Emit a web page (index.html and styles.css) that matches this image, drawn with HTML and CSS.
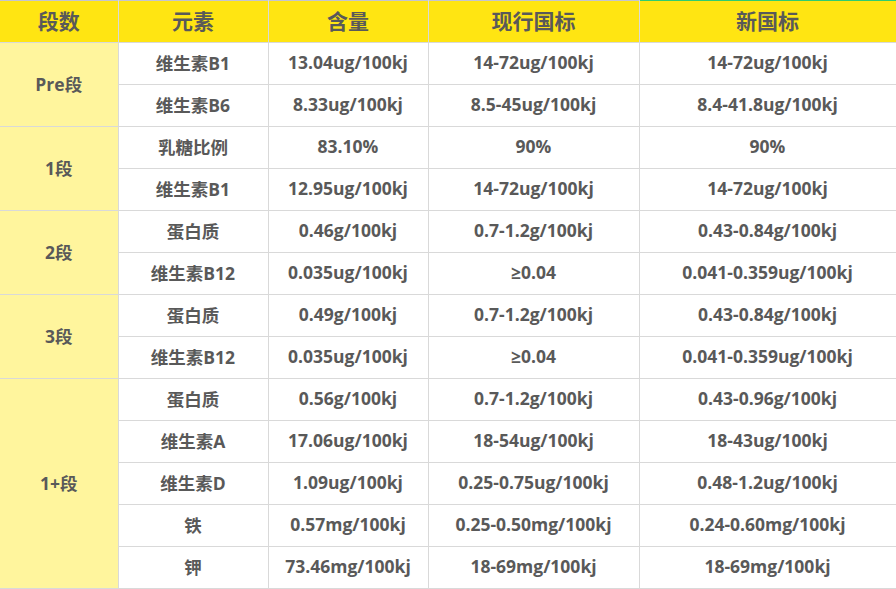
FILE: index.html
```html
<!DOCTYPE html>
<html lang="zh">
<head>
<meta charset="utf-8">
<link rel="stylesheet" href="styles.css">
</head>
<body>
<table class="grid">
  <colgroup>
    <col class="c1"><col class="c2"><col class="c3"><col class="c4"><col class="c5">
  </colgroup>
  <thead>
    <tr>
      <th>段数</th><th>元素</th><th>含量</th><th>现行国标</th><th class="new">新国标</th>
    </tr>
  </thead>
  <tbody>
    <tr><td class="stage" rowspan="2">Pre段</td><td>维生素B1</td><td>13.04ug/100kj</td><td>14-72ug/100kj</td><td>14-72ug/100kj</td></tr>
    <tr><td>维生素B6</td><td>8.33ug/100kj</td><td>8.5-45ug/100kj</td><td>8.4-41.8ug/100kj</td></tr>
    <tr><td class="stage" rowspan="2">1段</td><td>乳糖比例</td><td>83.10%</td><td>90%</td><td>90%</td></tr>
    <tr><td>维生素B1</td><td>12.95ug/100kj</td><td>14-72ug/100kj</td><td>14-72ug/100kj</td></tr>
    <tr><td class="stage" rowspan="2">2段</td><td>蛋白质</td><td>0.46g/100kj</td><td>0.7-1.2g/100kj</td><td>0.43-0.84g/100kj</td></tr>
    <tr><td>维生素B12</td><td>0.035ug/100kj</td><td>≥0.04</td><td>0.041-0.359ug/100kj</td></tr>
    <tr><td class="stage" rowspan="2">3段</td><td>蛋白质</td><td>0.49g/100kj</td><td>0.7-1.2g/100kj</td><td>0.43-0.84g/100kj</td></tr>
    <tr><td>维生素B12</td><td>0.035ug/100kj</td><td>≥0.04</td><td>0.041-0.359ug/100kj</td></tr>
    <tr><td class="stage" rowspan="5">1+段</td><td>蛋白质</td><td>0.56g/100kj</td><td>0.7-1.2g/100kj</td><td>0.43-0.96g/100kj</td></tr>
    <tr><td>维生素A</td><td>17.06ug/100kj</td><td>18-54ug/100kj</td><td>18-43ug/100kj</td></tr>
    <tr><td>维生素D</td><td>1.09ug/100kj</td><td>0.25-0.75ug/100kj</td><td>0.48-1.2ug/100kj</td></tr>
    <tr><td>铁</td><td>0.57mg/100kj</td><td>0.25-0.50mg/100kj</td><td>0.24-0.60mg/100kj</td></tr>
    <tr><td>钾</td><td>73.46mg/100kj</td><td>18-69mg/100kj</td><td>18-69mg/100kj</td></tr>
  </tbody>
</table>
</body>
</html>
```

FILE: styles.css
```css
html, body {
  margin: 0;
  padding: 0;
  background: #ffffff;
}

.grid {
  width: 896px;
  table-layout: fixed;
  border-collapse: collapse;
  font-family: "Open Sans", "Noto Sans CJK SC", sans-serif;
  font-weight: 700;
  color: #595959;
}

.c1 { width: 118px; }
.c2 { width: 150px; }
.c3 { width: 160px; }
.c4 { width: 211px; }
.c5 { width: 257px; }

.grid th,
.grid td {
  border: 1px solid #d9d9d9;
  text-align: center;
  vertical-align: middle;
  padding: 0 0 3px 0;
  white-space: nowrap;
}

.grid th {
  height: 38px;
  background: #ffe512;
  font-size: 21px;
  border-top-color: #c4c4d0;
  border-left-color: #e6e6e6;
}

.grid th.new {
  border-top-color: #2ecc71;
}

.grid td {
  height: 38px;
  font-size: 17.5px;
}

.grid td.stage {
  background: #fff59d;
}

.grid tr > :first-child {
  border-left: none;
}
```
